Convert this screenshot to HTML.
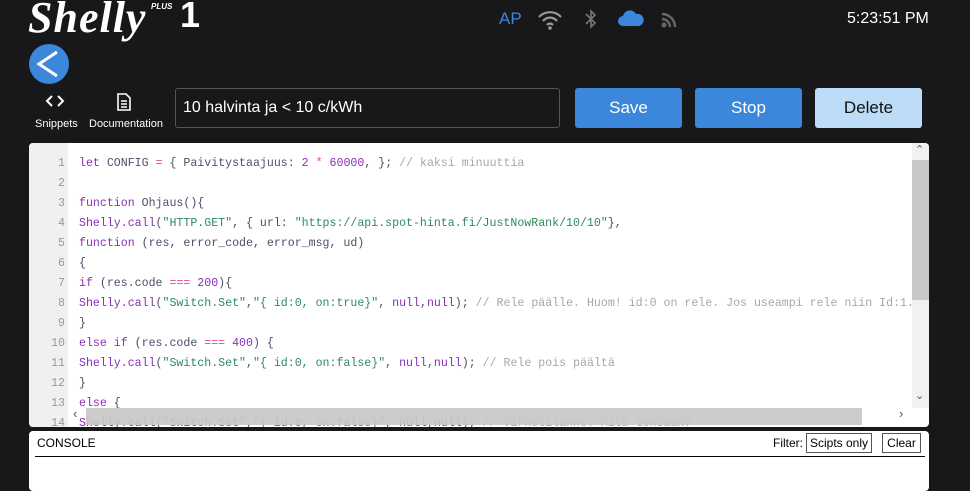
<!DOCTYPE html><html><head><style>
body{margin:0;width:970px;height:487px;background:#18181a;font-family:"Liberation Sans",sans-serif;position:relative;overflow:hidden}
.a{position:absolute}
.btn{position:absolute;top:88px;width:107px;height:40px;border-radius:3px;background:#3a87dc;color:#fff;font-size:17px;text-align:center;line-height:40px}
.code{font-family:"Liberation Mono",monospace;font-size:11.6px;color:#4a5068;white-space:pre}
.ln{position:absolute;left:0;width:36px;text-align:right;color:#999}
.k{color:#8a2fb8}.s{color:#2e8a5e}.c{color:#a3a8ae}.o{color:#e8489a}
</style></head><body>
<div class="a" style="left:28px;top:-8px;color:#fff;font:italic bold 44px 'Liberation Serif',serif;letter-spacing:1px">Shelly</div>
<div class="a" style="left:151px;top:2px;color:#fff;font:italic bold 8px 'Liberation Sans'">PLUS</div>
<div class="a" style="left:180px;top:-6px;color:#fff;font:bold 36px 'Liberation Sans'">1</div>
<div class="a" style="left:29px;top:44px;width:40px;height:40px;border-radius:50%;background:#3a87dc"></div>
<svg class="a" style="left:29px;top:44px" width="40" height="40"><path d="M28 8 L10 20 L28 32" stroke="#fff" stroke-width="3" fill="none"/></svg>
<div class="a" style="left:499px;top:9px;color:#3a87dc;font-size:17px">AP</div>
<svg class="a" style="left:537px;top:8px" width="26" height="22"><g fill="none" stroke="#999" stroke-width="2.2"><path d="M2 9a15 15 0 0 1 22 0"/><path d="M6 13a9 9 0 0 1 14 0"/><path d="M10 17a4 4 0 0 1 6 0"/></g><circle cx="13" cy="20" r="1.8" fill="#999"/></svg>
<svg class="a" style="left:583px;top:9px" width="16" height="20"><path d="M3 5 L12 14 L8 18 V2 L12 6 L3 15" stroke="#777" stroke-width="1.6" fill="none"/></svg>
<svg class="a" style="left:617px;top:8px" width="28" height="20"><path d="M6 18a5 5 0 0 1 0-10a7 7 0 0 1 13-2a6 6 0 0 1 3 12z" fill="#3a87dc"/></svg>
<svg class="a" style="left:661px;top:10px" width="18" height="18"><g fill="none" stroke="#666" stroke-width="2.5"><path d="M1 4a13 13 0 0 1 13 13"/><path d="M1 9a8 8 0 0 1 8 8"/></g><circle cx="3" cy="15" r="2.5" fill="#666"/></svg>
<div class="a" style="left:847px;top:10px;color:#fff;font-size:16px">5:23:51 PM</div>
<svg class="a" style="left:44px;top:93px" width="22" height="16"><path d="M8 3 L3 8 L8 13 M14 3 L19 8 L14 13" stroke="#fff" stroke-width="2" fill="none"/></svg>
<div class="a" style="left:35px;top:118px;color:#fff;font-size:11px">Snippets</div>
<svg class="a" style="left:116px;top:92px" width="16" height="20"><path d="M2 2h8l4 4v12H2z M5 9h6 M5 12h6 M5 15h6" stroke="#fff" stroke-width="1.6" fill="none"/></svg>
<div class="a" style="left:89px;top:118px;color:#fff;font-size:11px">Documentation</div>
<div class="a" style="left:175px;top:88px;width:376px;height:38px;border:1px solid #555;border-radius:3px;color:#fff;font-size:16px;line-height:38px;padding-left:7px">10 halvinta ja &lt; 10 c/kWh</div>
<div class="btn" style="left:575px">Save</div>
<div class="btn" style="left:695px">Stop</div>
<div class="btn" style="left:815px;background:#bddcf7;color:#111">Delete</div>
<div class="a" style="left:29px;top:143px;width:900px;height:284px;background:#fff;border-radius:4px;overflow:hidden">
<div class="a" style="left:0;top:0;width:39px;height:284px;background:#f0f0f0"></div>
<div class="a code" style="left:0;top:11px;line-height:20px;width:883px;height:273px;overflow:hidden"><div class="ln">1
2
3
4
5
6
7
8
9
10
11
12
13
14</div><div style="position:absolute;left:50px;top:0"><span class="k">let</span> CONFIG <span class="o">=</span> { Paivitystaajuus: <span class="k">2</span> <span class="o">*</span> <span class="k">60000</span>, }; <span class="c">// kaksi minuuttia</span>

<span class="k">function</span> Ohjaus(){
<span class="k">Shelly.call</span>(<span class="s">"HTTP.GET"</span>, { url: <span class="s">"https://api.spot-hinta.fi/JustNowRank/10/10"</span>},
<span class="k">function</span> (res, error_code, error_msg, ud)
{
<span class="k">if</span> (res.code <span class="o">===</span> <span class="k">200</span>){
<span class="k">Shelly.call</span>(<span class="s">"Switch.Set"</span>,<span class="s">"{ id:0, on:true}"</span>, <span class="k">null</span>,<span class="k">null</span>); <span class="c">// Rele päälle. Huom! id:0 on rele. Jos useampi rele niin Id:1.</span>
}
<span class="k">else if</span> (res.code <span class="o">===</span> <span class="k">400</span>) {
<span class="k">Shelly.call</span>(<span class="s">"Switch.Set"</span>,<span class="s">"{ id:0, on:false}"</span>, <span class="k">null</span>,<span class="k">null</span>); <span class="c">// Rele pois päältä</span>
}
<span class="k">else</span> {
<span class="k">Shelly.call</span>(<span class="s">"Switch.Set"</span>,<span class="s">"{ id:0, on:false}"</span>, <span class="k">null</span>,<span class="k">null</span>); <span class="c">// Virhetilanne. Mitä tehdään?</span></div></div>
<div class="a" style="left:883px;top:0;width:17px;height:265px;background:#f1f1f1"></div>
<div class="a" style="left:883px;top:17px;width:17px;height:140px;background:#c8c8c8"></div>
<div class="a" style="left:886px;top:0;color:#555;font-size:11px">&#8963;</div>
<div class="a" style="left:886px;top:246px;color:#555;font-size:11px">&#8964;</div>
<div class="a" style="left:57px;top:265px;width:776px;height:17px;background:rgba(200,200,200,.92)"></div>
<div class="a" style="left:44px;top:263px;color:#555;font-size:13px">&#8249;</div>
<div class="a" style="left:870px;top:263px;color:#555;font-size:13px">&#8250;</div>
</div>
<div class="a" style="left:29px;top:431px;width:900px;height:60px;background:#fff;border-radius:4px">
<div class="a" style="left:8px;top:5px;font-size:12px;color:#000">CONSOLE</div>
<div class="a" style="left:744px;top:5px;font-size:12px;color:#000">Filter:</div>
<div class="a" style="left:777px;top:2px;width:64px;height:18px;border:1px solid #555;font-size:12px;line-height:18px;text-align:center">Scipts only</div>
<div class="a" style="left:853px;top:2px;width:37px;height:18px;border:1px solid #555;font-size:12px;line-height:18px;text-align:center">Clear</div>
<div class="a" style="left:6px;top:25px;width:890px;height:1px;background:#000"></div>
</div>
</body></html>
